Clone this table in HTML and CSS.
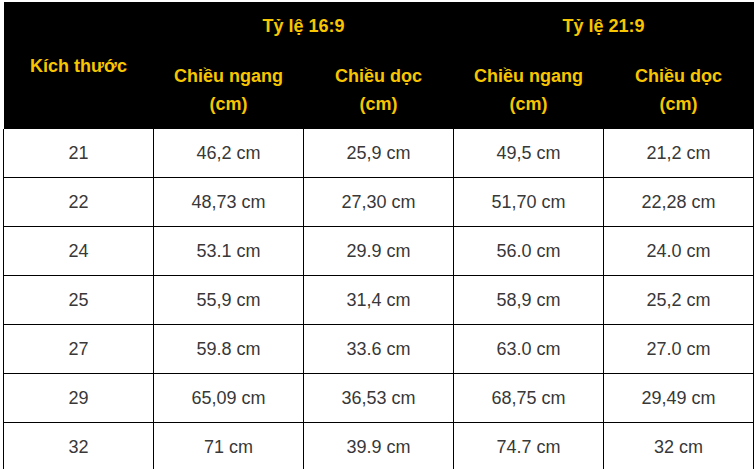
FILE: index.html
```html
<!DOCTYPE html>
<html lang="vi">
<head>
<meta charset="utf-8">
<link rel="stylesheet" href="styles.css">
</head>
<body>
<table class="size-table">
  <colgroup>
    <col class="col"><col class="col"><col class="col"><col class="col"><col class="col">
  </colgroup>
  <thead>
    <tr class="head-top">
      <th rowspan="2" class="head-size">Kích thước</th>
      <th colspan="2">Tỷ lệ 16:9</th>
      <th colspan="2">Tỷ lệ 21:9</th>
    </tr>
    <tr class="head-sub">
      <th>Chiều ngang<br>(cm)</th>
      <th>Chiều dọc<br>(cm)</th>
      <th>Chiều ngang<br>(cm)</th>
      <th>Chiều dọc<br>(cm)</th>
    </tr>
  </thead>
  <tbody>
    <tr><td>21</td><td>46,2 cm</td><td>25,9 cm</td><td>49,5 cm</td><td>21,2 cm</td></tr>
    <tr><td>22</td><td>48,73 cm</td><td>27,30 cm</td><td>51,70 cm</td><td>22,28 cm</td></tr>
    <tr><td>24</td><td>53.1 cm</td><td>29.9 cm</td><td>56.0 cm</td><td>24.0 cm</td></tr>
    <tr><td>25</td><td>55,9 cm</td><td>31,4 cm</td><td>58,9 cm</td><td>25,2 cm</td></tr>
    <tr><td>27</td><td>59.8 cm</td><td>33.6 cm</td><td>63.0 cm</td><td>27.0 cm</td></tr>
    <tr><td>29</td><td>65,09 cm</td><td>36,53 cm</td><td>68,75 cm</td><td>29,49 cm</td></tr>
    <tr><td>32</td><td>71 cm</td><td>39.9 cm</td><td>74.7 cm</td><td>32 cm</td></tr>
  </tbody>
</table>
</body>
</html>
```

FILE: styles.css
```css
html, body {
  margin: 0;
  padding: 0;
  background: #ffffff;
}
body {
  padding: 2px 0 0 3px;
  font-family: "Liberation Sans", Arial, sans-serif;
}
.size-table {
  border-collapse: collapse;
  table-layout: fixed;
  width: 750px;
}
.size-table .col {
  width: 150px;
}
.size-table th {
  background: #000000;
  color: #f7c600;
  font-weight: bold;
  font-size: 18px;
  text-align: center;
  padding: 0;
}
.head-top th {
  height: 48px;
  line-height: 48px;
}
.head-top .head-size {
  vertical-align: middle;
  line-height: 28px;
}
.head-sub th {
  height: 79px;
  line-height: 28px;
  vertical-align: middle;
}
.size-table td {
  border: 1px solid #000000;
  height: 48px;
  padding: 0;
  text-align: center;
  font-size: 18px;
  color: #383838;
}
.size-table tbody tr:first-child td {
  border-top: none;
}
```
